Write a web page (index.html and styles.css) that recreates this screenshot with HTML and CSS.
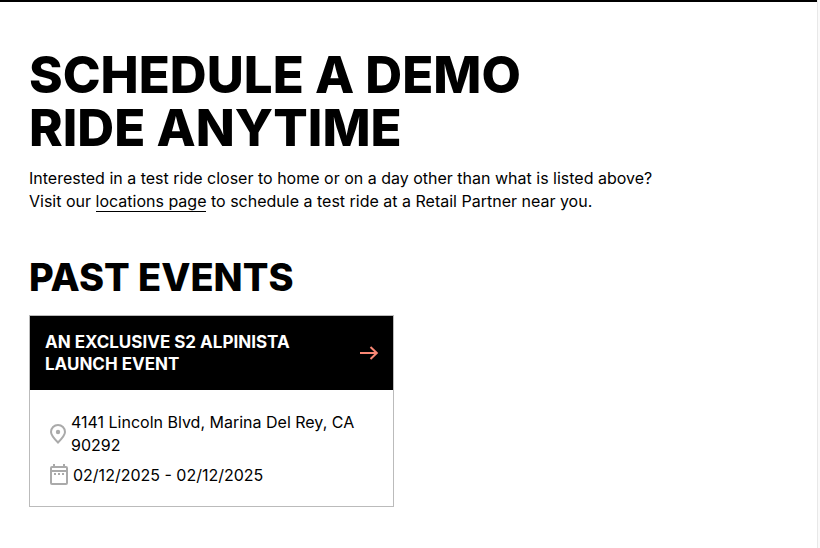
FILE: index.html
```html
<!DOCTYPE html>
<html lang="en">
<head>
<meta charset="utf-8">
<title>Demo rides</title>
<link rel="stylesheet" href="styles.css">
</head>
<body>
<main class="page">
  <section class="intro">
    <h1 class="title">Schedule a demo<br>ride anytime</h1>
    <p class="text">Interested in a test ride closer to home or on a day other than what is listed above?<br>Visit our <a class="link" href="#locations">locations page</a> to schedule a test ride at a Retail Partner near you.</p>
  </section>
  <section class="events">
    <h2 class="subtitle">Past events</h2>
    <article class="card">
      <a class="card-head" href="#event">
        <h3 class="card-title">An exclusive S2 Alpinista launch event</h3>
        <svg class="arrow" viewBox="0 0 20 16" aria-hidden="true"><path d="M1 8H18M11.500 2L17.800 8L11.500 14"/></svg>
      </a>
      <div class="card-body">
        <div class="row">
          <svg class="icon" viewBox="0 0 24 24" aria-hidden="true"><path class="line" d="M12 20.500C8 16.500 5 13.500 5 10a7 7 0 0 1 14 0c0 3.500-3 6.500-7 10.500Z"/><circle class="solid" cx="12" cy="10" r="2.200"/></svg>
          <span>4141 Lincoln Blvd, Marina Del Rey, CA 90292</span>
        </div>
        <div class="row date">
          <svg class="icon" viewBox="0 0 24 24" aria-hidden="true"><rect class="line" x="5" y="4" width="16" height="17" rx="1"/><path class="line" d="M5 8H21M8 1V4M18 1V4"/><path class="solid" d="M8 10h2v2H8zM12 10h2v2h-2zM16 10h2v2h-2z"/></svg>
          <span>02/12/2025 - 02/12/2025</span>
        </div>
      </div>
    </article>
  </section>
</main>
<div class="rail"></div>
</body>
</html>
```
FILE: styles.css
```css
* { box-sizing: border-box; }
body {
  margin: 0;
  min-height: 100vh;
  display: flex;
  background: #fff;
  color: #000;
  font: 400 16px/23px Inter, "Liberation Sans", sans-serif;
}
h1, h2, h3, p { margin: 0; }
.page {
  flex: 1;
  border-top: 2px solid #000;
  padding: 46px 29px 40px;
}
.rail {
  width: 3px;
  background: #fafafa;
  border-left: 1px solid #e8e8e8;
}
.title {
  font-size: 51px;
  line-height: 53px;
  font-weight: 800;
  text-transform: uppercase;
}
.text { margin-top: 13px; }
.link {
  color: inherit;
  text-decoration: none;
  border-bottom: 1px solid #000;
}
.events { margin-top: 42px; }
.subtitle {
  font-size: 38px;
  line-height: 44px;
  font-weight: 800;
  text-transform: uppercase;
}
.card {
  max-width: 365px;
  margin-top: 16px;
  border: 1px solid #bbb;
}
.card-head {
  display: flex;
  align-items: center;
  justify-content: space-between;
  gap: 16px;
  padding: 15px 14px 15px 15px;
  background: #000;
  color: #fff;
  text-decoration: none;
}
.card-title {
  max-width: 260px;
  font-size: 17px;
  line-height: 22px;
  font-weight: 700;
  text-transform: uppercase;
}
.arrow {
  width: 20px;
  height: 16px;
  flex: none;
  fill: none;
  stroke: #f98774;
  stroke-width: 2;
}
.card-body { padding: 21px 16px 16px; }
.row {
  display: flex;
  align-items: center;
  gap: 1px;
}
.date {
  margin-top: 3px;
  min-height: 30px;
  gap: 3px;
}
.icon {
  width: 24px;
  height: 24px;
  flex: none;
}
.line { fill: none; stroke: #aaa; stroke-width: 2; }
.solid { fill: #aaa; }
```
